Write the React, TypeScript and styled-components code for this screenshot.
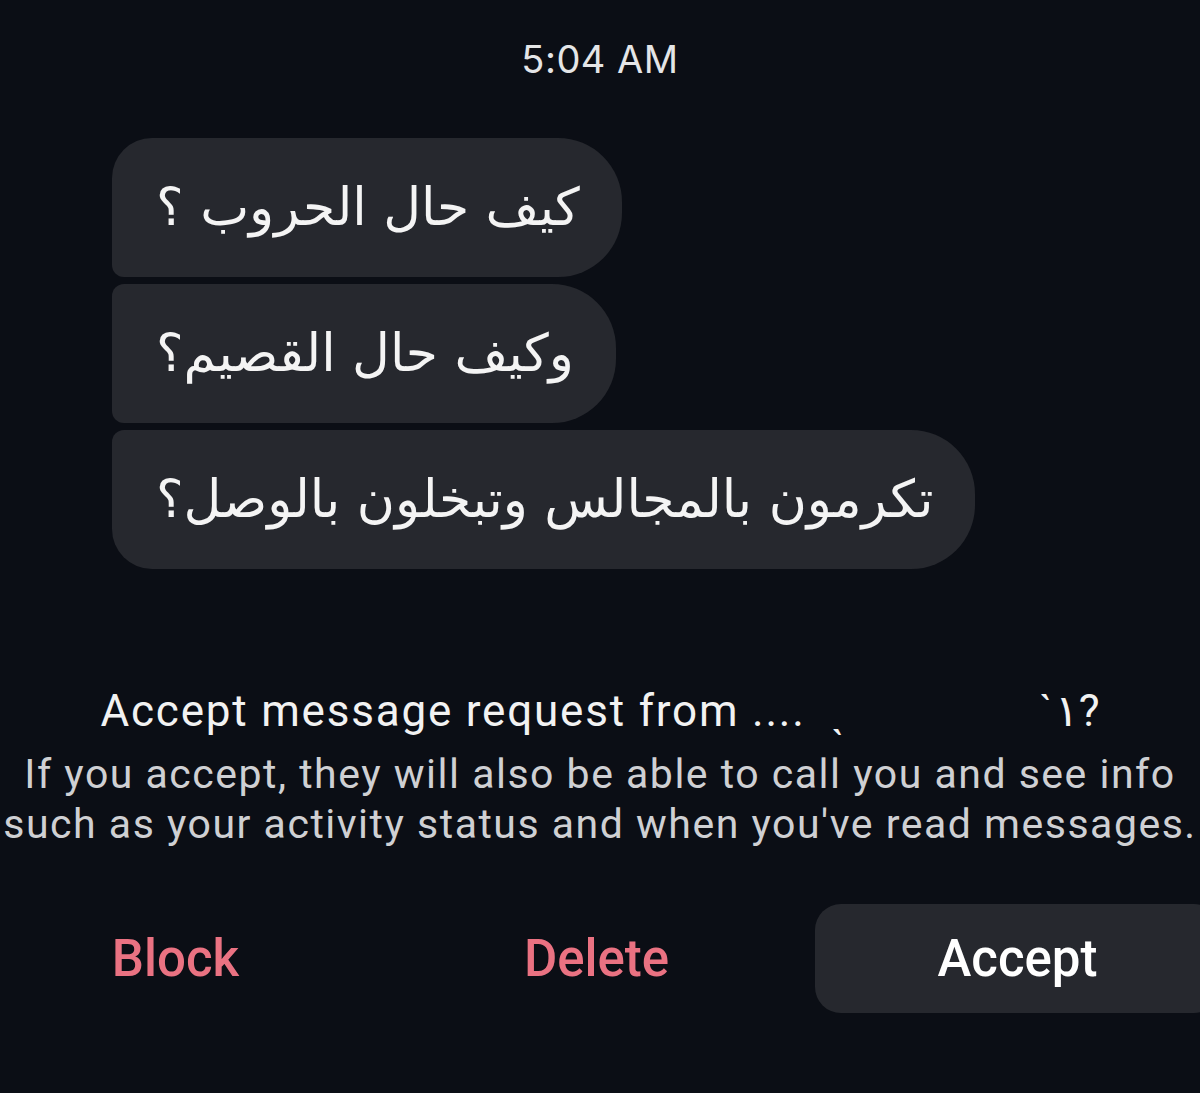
import React from "react";
import styled, { createGlobalStyle } from "styled-components";

const Global = createGlobalStyle`
  html, body {
    margin: 0;
    padding: 0;
    background: #0b0e15;
    width: 1200px;
    height: 1093px;
    overflow: hidden;
  }
  * { box-sizing: border-box; }
`;

const Screen = styled.div`
  width: 1200px;
  height: 1093px;
  background: #0b0e15;
  display: flex;
  flex-direction: column;
  font-family: Roboto, "Liberation Sans", sans-serif;
  color: #fff;
`;

const Timestamp = styled.div`
  padding-top: 36px;
  height: 138px;
  text-align: center;
  font-family: Inter, Roboto, sans-serif;
  font-size: 38px;
  letter-spacing: 0.5px;
  color: #e4e5e7;
  line-height: 46px;
`;

const Thread = styled.div`
  display: flex;
  flex-direction: column;
  align-items: flex-start;
  gap: 7px;
  padding-left: 112px;
`;

type Pos = "first" | "middle" | "last";

const Bubble = styled.div<{ $pos: Pos }>`
  direction: rtl;
  background: #26282e;
  height: 139px;
  display: flex;
  align-items: center;
  padding: 0 42px 2px 44px;
  font-family: "DejaVu Sans", sans-serif;
  font-size: 52px;
  color: #f4f4f4;
  border-radius: ${({ $pos }) =>
    $pos === "first"
      ? "40px 64px 64px 12px"
      : $pos === "middle"
      ? "12px 64px 64px 12px"
      : "12px 64px 64px 40px"};
`;

const Request = styled.div`
  margin-top: 116px;
  display: flex;
  flex-direction: column;
  align-items: center;
  text-align: center;
`;

const RequestTitle = styled.div`
  font-size: 44px;
  line-height: 52px;
  letter-spacing: 1.8px;
  color: #f2f2f2;
  white-space: pre;
`;

const RequestBody = styled.div`
  margin-top: 12px;
  font-size: 41px;
  line-height: 50px;
  letter-spacing: 1.5px;
  color: #cfd0d3;
  white-space: nowrap;
`;

const Actions = styled.div`
  margin-top: 55px;
  margin-left: -27px;
  display: grid;
  grid-template-columns: repeat(3, 405px);
  column-gap: 16px;
  height: 109px;
`;

const Action = styled.div<{ $primary?: boolean }>`
  display: flex;
  align-items: center;
  justify-content: center;
  font-size: 51px;
  font-weight: 500;
  color: ${({ $primary }) => ($primary ? "#ffffff" : "#ea7282")};
  background: ${({ $primary }) => ($primary ? "#26282e" : "transparent")};
  border-radius: 26px;
`;

export default function App() {
  return (
    <Screen>
      <Global />
      <Timestamp>5:04 AM</Timestamp>
      <Thread>
        <Bubble $pos="first">كيف حال الحروب ؟</Bubble>
        <Bubble $pos="middle">وكيف حال القصيم؟</Bubble>
        <Bubble $pos="last">تكرمون بالمجالس وتبخلون بالوصل؟</Bubble>
      </Thread>
      <Request>
        <RequestTitle>{"Accept message request from ....  ˎ               ˋ١?"}</RequestTitle>
        <RequestBody>
          If you accept, they will also be able to call you and see info
          <br />
          such as your activity status and when you've read messages.
        </RequestBody>
      </Request>
      <Actions>
        <Action>Block</Action>
        <Action>Delete</Action>
        <Action $primary>Accept</Action>
      </Actions>
    </Screen>
  );
}
